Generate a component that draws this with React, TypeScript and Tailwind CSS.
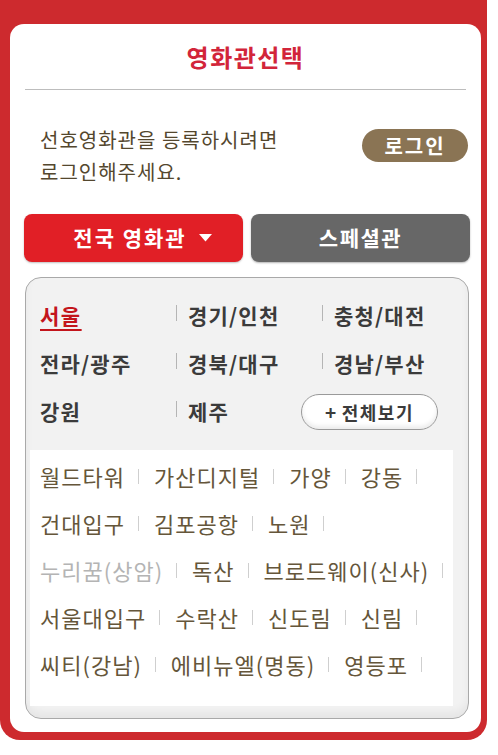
const regions = [
  ['서울', '경기/인천', '충청/대전'],
  ['전라/광주', '경북/대구', '경남/부산'],
  ['강원', '제주'],
];

const theaterRows: { name: string; off?: boolean }[][] = [
  [{ name: '월드타워' }, { name: '가산디지털' }, { name: '가양' }, { name: '강동' }],
  [{ name: '건대입구' }, { name: '김포공항' }, { name: '노원' }],
  [{ name: '누리꿈(상암)', off: true }, { name: '독산' }, { name: '브로드웨이(신사)' }],
  [{ name: '서울대입구' }, { name: '수락산' }, { name: '신도림' }, { name: '신림' }],
  [{ name: '씨티(강남)' }, { name: '에비뉴엘(명동)' }, { name: '영등포' }],
];

function Divider() {
  return <span className="inline-block w-px h-[16px] bg-[#b5b5b5] mr-[11px] -mt-[6px]" />;
}

export default function App() {
  return (
    <div className="min-h-screen bg-white font-['Noto_Sans_CJK_KR','Noto_Sans',sans-serif]">
      <div className="w-[487px] bg-[#cd2a2e] pt-[24px] pl-[10px] pr-[6px] pb-[8px] rounded-b-[20px]">
        <div className="bg-white rounded-[14px] pt-[16px] pb-[13px]">
          {/* title */}
          <h1 className="text-center text-[24px] leading-[33px] font-bold text-[#d2253a] tracking-[1.5px]">
            영화관선택
          </h1>
          <div className="mx-[15px] mt-[16px] h-px bg-[#bdbdbd]" />

          {/* login notice */}
          <div className="flex items-start justify-between pl-[30px] pr-[13px] mt-[34px]">
            <p className="text-[20px] leading-[32px] text-[#54472e] tracking-[1px]">
              선호영화관을 등록하시려면
              <br />
              로그인해주세요.
            </p>
            <button className="mt-[5px] h-[33px] w-[106px] rounded-full bg-[#8a7454] text-white text-[20px] font-bold leading-none tracking-[2px]">
              로그인
            </button>
          </div>

          {/* tabs */}
          <div className="flex gap-[8px] pl-[14px] pr-[11px] mt-[26px]">
            <button className="w-[219px] h-[48px] rounded-[8px] bg-[#e11f26] text-white text-[21px] font-bold tracking-[2px] flex items-center justify-center gap-[12px] pl-[18px] shadow-[0_1px_2px_rgba(0,0,0,0.25)]">
              <span>전국 영화관</span>
              <svg width="13" height="8" viewBox="0 0 13 8">
                <path d="M0 0 H13 L6.5 7.5 Z" fill="#fff" />
              </svg>
            </button>
            <button className="w-[219px] h-[48px] rounded-[8px] bg-[#676767] text-white text-[21px] font-bold tracking-[1.5px] flex items-center justify-center shadow-[0_1px_2px_rgba(0,0,0,0.3)]">
              스페셜관
            </button>
          </div>

          {/* region box */}
          <div className="ml-[15px] mr-[12px] mt-[15px] rounded-[16px] border-[1.5px] border-[#a9a9a9] bg-[#f2f2f2] pb-[12px] shadow-[inset_0_-6px_8px_rgba(0,0,0,0.05)]">
            <div className="pt-[14px] pl-[14px]">
              {regions.map((row, r) => (
                <div key={r} className="grid grid-cols-[136px_146px_1fr] h-[48px] items-center">
                  {row.map((name, i) => (
                    <div key={name} className="flex items-center">
                      {i > 0 && <Divider />}
                      <span
                        className={
                          name === '서울'
                            ? 'text-[21px] font-bold tracking-[1.5px] text-[#c3151c] underline underline-offset-[5px] decoration-[2px]'
                            : 'text-[21px] font-bold tracking-[1.2px] text-[#3b3b3b]'
                        }
                      >
                        {name}
                      </span>
                    </div>
                  ))}
                  {r === 2 && (
                    <div className="-ml-[21px]">
                      <button className="h-[36px] w-[137px] rounded-full border-[1.5px] border-[#9a9a9a] bg-white text-[18px] font-bold tracking-[1.5px] text-[#3b3b3b] flex items-center justify-center gap-[4px] shadow-[inset_0_-3px_4px_rgba(0,0,0,0.08)]">
                        <span className="text-[19px]">+</span>
                        <span>전체보기</span>
                      </button>
                    </div>
                  )}
                </div>
              ))}
            </div>

            {/* theater list */}
            <div className="ml-[4px] mr-[15px] mt-[14px] bg-white pt-[3px] pb-[18px] pl-[10px]">
              {theaterRows.map((row, r) => (
                <div key={r} className="flex items-center h-[47px] whitespace-nowrap">
                  {row.map((t) => (
                    <div key={t.name} className="flex items-center shrink-0">
                      <span
                        className={
                          'text-[22px] tracking-[1px] ' + (t.off ? 'text-[#b4b4b4]' : 'text-[#65563a]')
                        }
                      >
                        {t.name}
                      </span>
                      <span className="inline-block w-px h-[15px] bg-[#cfcfcf] ml-[13px] mr-[15px]" />
                    </div>
                  ))}
                </div>
              ))}
            </div>
          </div>
        </div>
      </div>
    </div>
  );
}
